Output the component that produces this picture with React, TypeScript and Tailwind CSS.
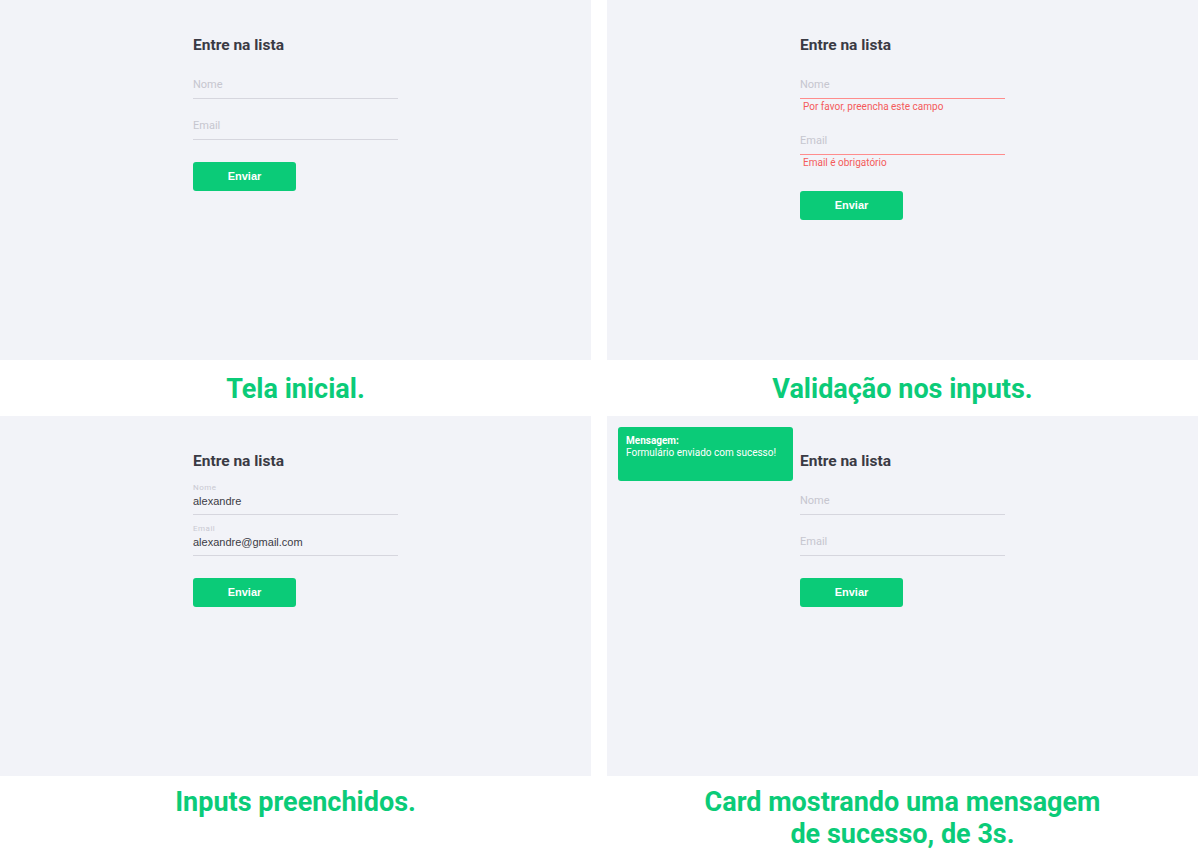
import React from 'react';

type FieldProps = {
  label: string;
  value?: string;
  error?: string;
};

function Field({ label, value, error }: FieldProps) {
  return (
    <div>
      <div
        className={
          'flex h-[41px] flex-col justify-end border-b ' +
          (error ? 'border-[#ff8c8c]' : 'border-[#d6d6de]')
        }
      >
        {value ? (
          <div className="pb-[6px]">
            <div className="font-['Roboto'] text-[8px] leading-[10px] tracking-[0.5px] text-[#c9c9d2]">{label}</div>
            <div className="mt-[1px] font-['Liberation_Sans',sans-serif] text-[11px] leading-[14px] text-[#3b3b45]">{value}</div>
          </div>
        ) : (
          <div className="pb-[6px] font-['Roboto',sans-serif] text-[11px] leading-[14px] text-[#c6c6cf]">{label}</div>
        )}
      </div>
      {error && (
        <div className="mb-[1px] mt-[2px] pl-[3px] font-['Roboto',sans-serif] text-[10px] leading-[12px] text-[#f45b5b]">{error}</div>
      )}
    </div>
  );
}

type FormProps = {
  nome?: string;
  email?: string;
  errors?: boolean;
};

function SignupForm({ nome, email, errors }: FormProps) {
  return (
    <div className="w-[205px] pt-[33px]">
      <h2 className="font-['Roboto',sans-serif] text-[15.5px] font-bold leading-[24px] text-[#3a3a44]">Entre na lista</h2>
      <div className="mt-[1px]">
        <Field label="Nome" value={nome} error={errors ? 'Por favor, preencha este campo' : undefined} />
        <Field label="Email" value={email} error={errors ? 'Email é obrigatório' : undefined} />
      </div>
      <button className='mt-[22px] flex h-[29px] w-[103px] items-center justify-center rounded-[3px] bg-[#0bcb78] font-["Liberation_Sans",sans-serif] text-[11px] font-bold text-white'>
        Enviar
      </button>
    </div>
  );
}

function Panel({ children, toast }: { children: React.ReactNode; toast?: boolean }) {
  return (
    <div className="relative h-[360px] bg-[#f2f3f8] pl-[193px]">
      {toast && (
        <div className="absolute left-[11px] top-[11px] h-[54px] w-[175px] rounded-[3px] bg-[#0bcb78] px-[8px] pt-[8px] font-['Roboto',sans-serif] text-[10px] leading-[12px] text-white">
          <div className="font-bold">Mensagem:</div>
          <div>Formulário enviado com sucesso!</div>
        </div>
      )}
      {children}
    </div>
  );
}

function Caption({ children, tall }: { children: React.ReactNode; tall?: boolean }) {
  return (
    <div
      className={
        "text-center font-['Roboto',sans-serif] text-[27px] font-bold leading-[32px] text-[#0bcb78] " +
        (tall ? 'h-[74px] pt-[10px]' : 'h-[56px] pt-[13px]')
      }
    >
      {children}
    </div>
  );
}

export default function App() {
  return (
    <div className="grid w-[1198px] grid-cols-2 gap-x-[16px] bg-white">
      <Panel>
        <SignupForm />
      </Panel>
      <Panel>
        <SignupForm errors />
      </Panel>
      <Caption>Tela inicial.</Caption>
      <Caption>Validação nos inputs.</Caption>
      <Panel>
        <SignupForm nome="alexandre" email="alexandre@gmail.com" />
      </Panel>
      <Panel toast>
        <SignupForm />
      </Panel>
      <Caption tall>Inputs preenchidos.</Caption>
      <Caption tall>
        Card mostrando uma mensagem
        <br />
        de sucesso, de 3s.
      </Caption>
    </div>
  );
}
